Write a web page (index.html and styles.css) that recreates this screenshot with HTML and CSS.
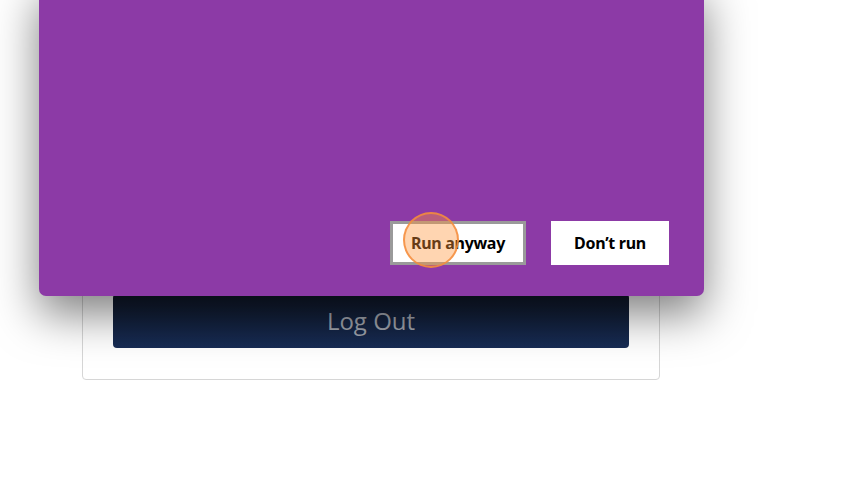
FILE: index.html
```html
<!DOCTYPE html>
<html>
<head>
<meta charset="utf-8">
<link rel="stylesheet" href="styles.css">
</head>
<body>
<div class="page">
  <div class="card">
    <button class="logout">Log Out</button>
  </div>
</div>
<div class="dialog">
  <div class="actions">
    <button class="btn primary">Run anyway</button>
    <button class="btn">Don’t run</button>
  </div>
</div>
<div class="click"></div>
</body>
</html>
```
FILE: styles.css
```css
html, body {
  margin: 0;
  padding: 0;
  background: #ffffff;
  width: 860px;
  height: 481px;
  overflow: hidden;
}
.page {
  padding-left: 82px;
  padding-top: 40px;
}
.card {
  border: 1px solid #d6d6d6;
  border-radius: 4px;
  background: #ffffff;
  padding: 253px 30px 31px 30px;
  width: 516px;
}
.logout {
  display: block;
  width: 516px;
  height: 54px;
  border: none;
  border-radius: 4px;
  background: linear-gradient(#101829, #172c55);
  color: #a0a4ad;
  font-family: "Open Sans", sans-serif;
  font-size: 24px;
  padding: 0 0 2px 0;
}
.dialog {
  position: absolute;
  left: 39px;
  top: -20px;
  width: 665px;
  height: 316px;
  background: #8c3aa6;
  border-radius: 7px;
  box-shadow: 0 18px 45px rgba(0, 0, 0, 0.5);
  display: flex;
  align-items: flex-end;
  justify-content: flex-end;
  box-sizing: border-box;
  padding: 0 35px 31px 0;
}
.actions {
  display: flex;
  gap: 25px;
}
.btn {
  height: 44px;
  width: 118px;
  border: none;
  background: #ffffff;
  color: #000000;
  font-family: "Noto Sans", sans-serif;
  font-weight: 700;
  font-size: 16px;
  letter-spacing: -0.3px;
  padding: 0;
}
.btn.primary {
  width: 136px;
  border: 3px solid #9a9a9a;
}
.click {
  position: absolute;
  left: 403px;
  top: 212px;
  width: 52px;
  height: 52px;
  border-radius: 50%;
  background: rgba(255, 150, 60, 0.4);
  border: 2px solid rgba(245, 140, 60, 0.85);
}
```
